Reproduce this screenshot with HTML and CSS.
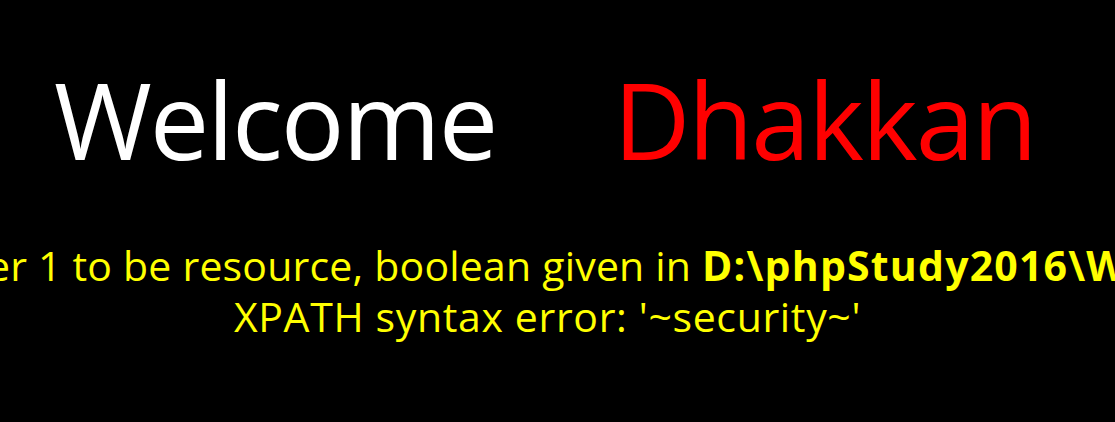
FILE: index.html
```html
<!DOCTYPE html>
<html lang="en">
<head>
<meta charset="utf-8">
<title>Less-17</title>
<link rel="stylesheet" href="styles.css">
</head>
<body>
<div class="page">
  <div class="welcome">Welcome&nbsp;&nbsp;&nbsp; <span class="red">Dhakkan&nbsp;</span></div>
  <div class="messages">
    <div class="line warn"><b>Warning</b>: mysql_fetch_array() expects parameter 1 to be resource, boolean given in <b>D:\phpStudy2016\WWW\sqli-labs\Less-17\index.php</b> on line <b>169</b></div>
    <div class="line xpath">XPATH syntax error: '~security~'</div>
  </div>
</div>
</body>
</html>
```
FILE: styles.css
```css
html, body {
  margin: 0;
  padding: 0;
  background: #000;
  overflow: hidden;
}
.page {
  width: 1115px;
  height: 422px;
  display: flex;
  flex-direction: column;
  align-items: center;
  font-family: "Open Sans", "Noto Sans", sans-serif;
}
.welcome {
  margin-top: 56px;
  color: #fff;
  font-size: 106px;
  letter-spacing: -2px;
  line-height: 1.2;
  white-space: nowrap;
  text-align: center;
}
.red {
  color: #f00;
  margin-left: 15px;
}
.messages {
  margin-top: 57px;
  margin-right: 20px;
  display: flex;
  flex-direction: column;
  align-items: center;
  color: #ff0;
  font-size: 41px;
  line-height: 51px;
}
.line {
  white-space: nowrap;
  flex: none;
}
.warn {
  letter-spacing: 0.2px;
  padding-left: 22px;
}
.warn b {
  letter-spacing: 1.2px;
}
.xpath {
  letter-spacing: 0.65px;
}
```
